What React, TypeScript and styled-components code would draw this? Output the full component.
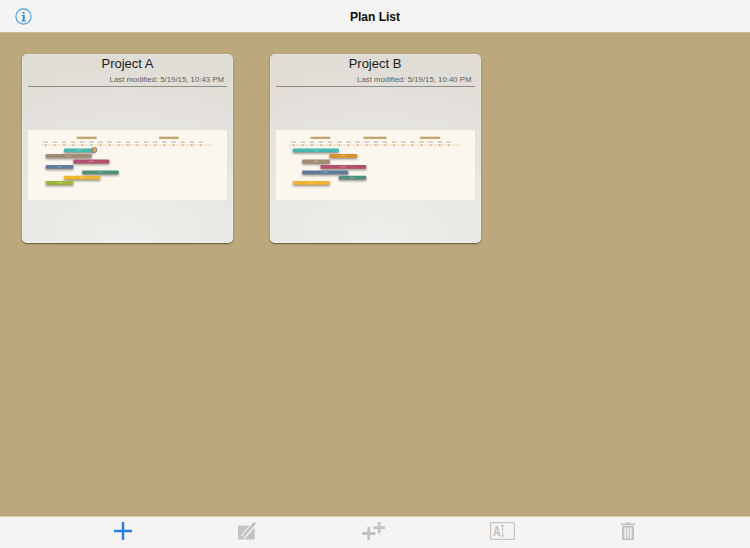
import React from "react";
import styled, { createGlobalStyle } from "styled-components";

const Global = createGlobalStyle`
  html, body { margin: 0; padding: 0; height: 100%; }
  #root { height: 100%; }
  body { font-family: "Liberation Sans", Arial, sans-serif; overflow: hidden; }
`;

const Page = styled.div`
  width: 750px;
  height: 548px;
  display: flex;
  flex-direction: column;
  background: #bba87c;
`;

const NavBar = styled.header`
  height: 32px;
  flex: none;
  box-sizing: content-box;
  display: flex;
  align-items: center;
  justify-content: center;
  position: relative;
  background: #f5f4f2;
  border-bottom: 1px solid #c9bb98;
`;

const NavTitle = styled.h1`
  margin: 1px 0 0;
  font-size: 12px;
  font-weight: 700;
  color: #0c0c0c;
`;

const InfoButton = styled.span`
  position: absolute;
  left: 15px;
  top: 8px;
  width: 17px;
  height: 17px;
  display: block;
`;

const Content = styled.main`
  flex: 1;
  display: flex;
  align-items: flex-start;
  gap: 36.5px;
  padding: 21px 0 0 22px;
`;

const Card = styled.article`
  width: 211px;
  height: 189px;
  box-sizing: border-box;
  padding: 0 6px;
  display: flex;
  flex-direction: column;
  border-radius: 5px;
  background: radial-gradient(ellipse 130% 100% at 50% 100%, #efeeec 0%, #e7e5e1 55%, #dfdcd5 100%);
  box-shadow: inset 0 0 0 1px rgba(255, 255, 255, 0.2), 0 1px 1.5px rgba(70, 58, 30, 0.75);
`;

const CardTitle = styled.h2`
  margin: 2px 0 0;
  height: 15px;
  font-size: 13px;
  line-height: 15px;
  font-weight: 400;
  text-align: center;
  color: #1c1c1c;
`;

const Modified = styled.div`
  margin-top: 4px;
  height: 10px;
  padding-right: 3px;
  font-size: 7.8px;
  line-height: 10px;
  text-align: right;
  color: #5f5e5b;
`;

const Rule = styled.div`
  margin-top: 1px;
  height: 1px;
  background: #8f8d88;
  flex: none;
`;

const Preview = styled.svg`
  display: block;
  width: 199px;
  height: 70px;
  margin-top: 43px;
  background: #fbf7ef;
`;

const ToolBar = styled.footer`
  height: 32px;
  flex: none;
  box-sizing: border-box;
  display: flex;
  align-items: center;
  justify-content: space-between;
  padding: 0 115px 3px 114px;
  background: #f5f4f2;
  border-top: 1px solid #d8ceb6;
`;

const ToolIcon = styled.svg`
  display: block;
  flex: none;
`;

type Bar = { x1: number; x2: number; y: number; c: string };
type Plan = {
  title: string;
  modified: string;
  groups: [number, number][];
  bars: Bar[];
  badge?: boolean;
};

const plans: Plan[] = [
  {
    title: "Project A",
    modified: "Last modified: 5/19/15, 10:43 PM",
    groups: [[48.7, 68.7], [131, 150.7]],
    badge: true,
    bars: [
      { x1: 36, x2: 66, y: 18.4, c: "#45b8b2" },
      { x1: 17.7, x2: 63.7, y: 24, c: "#a08b72" },
      { x1: 45.3, x2: 81.3, y: 29.6, c: "#b5506e" },
      { x1: 17.7, x2: 45.3, y: 35, c: "#5f7a9c" },
      { x1: 54.3, x2: 90.7, y: 40.4, c: "#4f8f7c" },
      { x1: 36, x2: 72.3, y: 45.8, c: "#eeb52f" },
      { x1: 17.7, x2: 45.3, y: 51, c: "#9db53e" },
    ],
  },
  {
    title: "Project B",
    modified: "Last modified: 5/19/15, 10:40 PM",
    groups: [[34.5, 54.2], [87.5, 110.5], [144, 164.2]],
    bars: [
      { x1: 16.8, x2: 62.8, y: 18.4, c: "#45b8b2" },
      { x1: 53.5, x2: 81.2, y: 24, c: "#d9922f" },
      { x1: 26.2, x2: 53.8, y: 29.6, c: "#a08b72" },
      { x1: 44.5, x2: 90.2, y: 35, c: "#b5506e" },
      { x1: 26.2, x2: 72.2, y: 40.4, c: "#5f7a9c" },
      { x1: 62.8, x2: 90.2, y: 45.8, c: "#4f8f7c" },
      { x1: 16.8, x2: 53.8, y: 51, c: "#eeb52f" },
    ],
  },
];

const ticks = Array.from({ length: 18 }, (_, i) => 17.7 + i * 9.13);
const gridRows = [18, 24, 29.5, 35, 40.5, 46, 51.5, 57];

function GanttPreview({ plan, id }: { plan: Plan; id: string }) {
  return (
    <Preview viewBox="0 0 199 70">
      <defs>
        <filter id={`soft-${id}`} x="-10%" y="-10%" width="120%" height="120%">
          <feGaussianBlur stdDeviation="0.6" />
        </filter>
        <filter id={`shade-${id}`} x="-20%" y="-100%" width="140%" height="300%">
          <feGaussianBlur stdDeviation="1.1" />
        </filter>
      </defs>
      <g filter={`url(#soft-${id})`}>
        {plan.groups.map(([a, b]) => (
          <rect key={a} x={a} y={6.7} width={b - a} height={2.2} fill="#bfa368" />
        ))}
        <rect x={12.7} y={14.6} width={172} height={0.8} fill="#e6d3ad" />
        {ticks.map((x) => (
          <g key={x}>
            <rect x={x - 2.2} y={11.4} width={4.4} height={1.6} fill="#d0c9b8" />
            <rect x={x - 0.6} y={14} width={1.2} height={2.2} fill="#c4b188" />
          </g>
        ))}
        {gridRows.map((y) => (
          <rect key={y} x={12.7} y={y} width={172} height={0.5} fill="#f8f2e6" />
        ))}
      </g>
      {plan.bars.map((b) => (
        <rect
          key={b.c}
          x={b.x1}
          y={b.y + 1.6}
          width={b.x2 - b.x1}
          height={3.6}
          fill="#5d5648"
          opacity={0.65}
          filter={`url(#shade-${id})`}
        />
      ))}
      <g filter={`url(#soft-${id})`}>
        {plan.bars.map((b) => (
          <g key={b.c}>
            <rect x={b.x1} y={b.y} width={b.x2 - b.x1} height={3.8} rx={0.8} fill={b.c} />
            <rect
              x={(b.x1 + b.x2) / 2 - 2.5}
              y={b.y + 1.3}
              width={5}
              height={1}
              fill="#ffffff"
              opacity={0.3}
            />
          </g>
        ))}
        {plan.badge && (
          <>
            <circle cx={66.3} cy={20} r={3} fill="#6d675b" opacity={0.75} />
            <circle cx={66.3} cy={20} r={2} fill="#e2a657" />
          </>
        )}
      </g>
    </Preview>
  );
}

const grey = "#c3c3c1";

export default function App() {
  return (
    <Page>
      <Global />
      <NavBar>
        <InfoButton>
          <svg width="17" height="17" viewBox="0 0 17 17">
            <circle cx="8.5" cy="8.5" r="7.6" fill="none" stroke="#4a97e4" strokeWidth="1.1" />
            <circle cx="8.5" cy="4.9" r="1.1" fill="#2f86e0" />
            <path d="M6.8 7h2.9v5.4h1.1v1H6.4v-1h1.4V8H6.8z" fill="#2f86e0" />
          </svg>
        </InfoButton>
        <NavTitle>Plan List</NavTitle>
      </NavBar>
      <Content>
        {plans.map((plan, i) => (
          <Card key={plan.title}>
            <CardTitle>{plan.title}</CardTitle>
            <Modified>{plan.modified}</Modified>
            <Rule />
            <GanttPreview plan={plan} id={String(i)} />
          </Card>
        ))}
      </Content>
      <ToolBar>
        <ToolIcon width="18" height="18" viewBox="0 0 18 18">
          <path d="M9 0v18M0 9h18" stroke="#1f7fe8" strokeWidth="2.4" fill="none" />
        </ToolIcon>
        <ToolIcon width="18" height="18" viewBox="0 0 18 18">
          <rect x="0" y="3.5" width="16.7" height="14" fill={grey} />
          <path d="M5 15 18 0" stroke="#f5f4f2" strokeWidth="5" fill="none" />
          <path d="M5.8 13.6 17 0.8" stroke={grey} strokeWidth="2.8" fill="none" />
          <path d="M4.6 15.2 5.2 12.4 7.6 14.4z" fill={grey} />
        </ToolIcon>
        <ToolIcon width="23" height="18" viewBox="0 0 23 18">
          <path d="M0 11.5h13.5M6.8 5v13" stroke={grey} strokeWidth="2.8" fill="none" />
          <path d="M11.5 5.7H23M17.2 0v11.4" stroke={grey} strokeWidth="2.8" fill="none" />
        </ToolIcon>
        <ToolIcon width="25" height="18" viewBox="0 0 25 18">
          <rect x="0.6" y="0.6" width="23.8" height="16.8" fill="none" stroke={grey} strokeWidth="1.2" />
          <text
            x="3.2"
            y="14"
            fontFamily="Liberation Mono, monospace"
            fontSize="14"
            fontWeight="700"
            textLength="7"
            lengthAdjust="spacingAndGlyphs"
            fill={grey}
          >
            A
          </text>
          <path d="M11 3.5h3.4M12.7 3.5v10.5M11 14h3.4" stroke={grey} fill="none" />
        </ToolIcon>
        <ToolIcon width="14" height="18" viewBox="0 0 14 18">
          <path d="M4.5 1.6V.4h5v1.2H14v1.6H0V1.6z" fill={grey} />
          <path d="M1 4h12v14H1zM3.4 5.4v11.2h1.6V5.4zM6.2 5.4v11.2h1.6V5.4zM9 5.4v11.2h1.6V5.4z" fill={grey} fillRule="evenodd" />
        </ToolIcon>
      </ToolBar>
    </Page>
  );
}
